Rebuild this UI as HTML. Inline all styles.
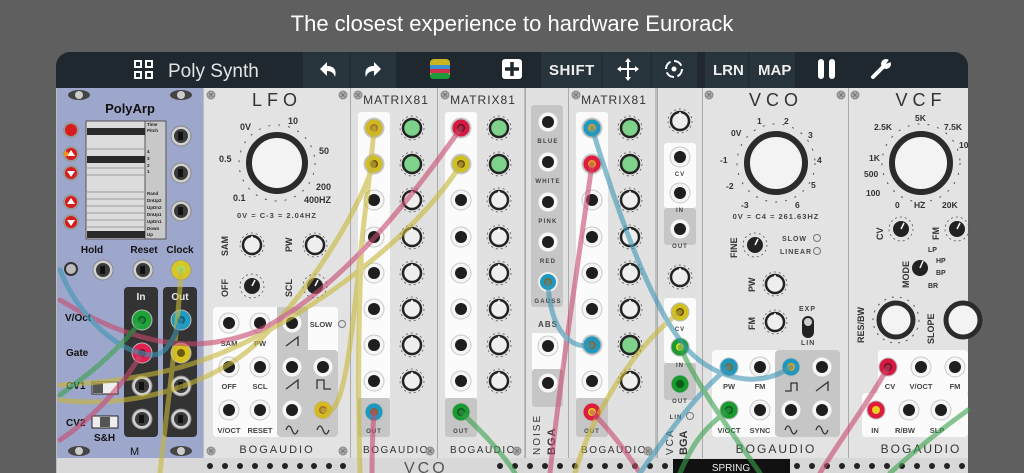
<!DOCTYPE html>
<html><head><meta charset="utf-8"><style>
html,body{margin:0;padding:0;background:#5f5f5f;width:1024px;height:473px;overflow:hidden}
svg{display:block}
text{font-family:"Liberation Sans",sans-serif}
</style></head><body>
<svg width="1024" height="473" viewBox="0 0 1024 473" xmlns="http://www.w3.org/2000/svg">
<defs>
 <g id="jk"><circle r="10" fill="#f6f6f6" stroke="#c8c8c8"/><circle r="6" fill="#1e1e1e"/></g>
 <g id="mj"><circle r="10" fill="#cfcfcf" stroke="#888"/><circle r="7" fill="#3a3a3a"/><rect x="-3" y="-4" width="5" height="8" fill="#111"/></g>
 <g id="kn"><circle r="12" fill="none" stroke="#555" stroke-width="0.8" stroke-dasharray="2 3"/><circle r="9" fill="#eee" stroke="#222" stroke-width="2.5"/><line x1="0" y1="-9" x2="0" y2="-5" stroke="#fff" stroke-width="1.5"/></g>
 <g id="gk"><circle r="12" fill="none" stroke="#555" stroke-width="0.8" stroke-dasharray="2 3"/><circle r="9" fill="#7fd28c" stroke="#222" stroke-width="2.5"/></g>
 <g id="dk"><circle r="12" fill="none" stroke="#555" stroke-width="0.8" stroke-dasharray="2 3"/><circle r="8" fill="#222"/><line x1="0" y1="0" x2="3" y2="-6" stroke="#fff" stroke-width="1.5"/></g>
 <g id="sc"><circle r="4" fill="#aaa" stroke="#888"/><path d="M-2 -2L2 2M2 -2L-2 2" stroke="#777"/></g>
</defs>
<text x="512" y="31" font-size="22" fill="#fff" text-anchor="middle">The closest experience to hardware Eurorack</text>
<path d="M56 66a14 14 0 0 1 14-14h884a14 14 0 0 1 14 14V473H56Z" fill="#1e282e"/>
<rect x="303" y="52" width="93" height="36" fill="#28343b"/>
<line x1="350" y1="52" x2="350" y2="88" stroke="#1e282e"/>
<rect x="541" y="52" width="156" height="36" fill="#28343b"/>
<line x1="602" y1="52" x2="602" y2="88" stroke="#1e282e"/><line x1="651" y1="52" x2="651" y2="88" stroke="#1e282e"/>
<rect x="705" y="52" width="90" height="36" fill="#28343b"/>
<line x1="749" y1="52" x2="749" y2="88" stroke="#1e282e"/>
<g fill="#fff"><rect x="134" y="60" width="8" height="8"/><rect x="145" y="60" width="8" height="8"/><rect x="134" y="71" width="8" height="8"/><rect x="145" y="71" width="8" height="8"/></g>
<g fill="#1e282e"><rect x="136" y="62" width="4" height="4"/><rect x="147" y="62" width="4" height="4"/><rect x="136" y="73" width="4" height="4"/><rect x="147" y="73" width="4" height="4"/></g>
<text x="168" y="77" font-size="19" fill="#e4e4e4">Poly Synth</text>
<path d="M320 69l7-7v4c7 0 10 4 8 11c-1-4-4-6-8-6v5z" fill="#fff"/>
<path d="M381 69l-7-7v4c-7 0-10 4-8 11c1-4 4-6 8-6v5z" fill="#fff"/>
<rect x="430" y="59" width="20" height="20" rx="4" fill="#c9b321"/><rect x="430" y="65" width="20" height="4" fill="#3a8fd0"/><rect x="430" y="69" width="20" height="4" fill="#d03050"/><rect x="430" y="73" width="20" height="6" rx="3" fill="#1f9a3a"/>
<rect x="502" y="59" width="20" height="20" rx="3" fill="#fff"/><path d="M512 62v14M505 69h14" stroke="#1e282e" stroke-width="3.5"/>
<text x="549" y="75" font-size="15" font-weight="bold" fill="#eee" font-family="Liberation Mono" letter-spacing="0.5">SHIFT</text>
<path d="M628 60v19M618 69h20" stroke="#fff" stroke-width="2"/><path d="M628 58l-3 4h6zM628 81l-3-4h6zM617 69l4-3v6zM639 69l-4-3v6z" fill="#fff"/>
<circle cx="674" cy="69" r="8" fill="none" stroke="#fff" stroke-width="2" stroke-dasharray="9 3.5"/><circle cx="674" cy="69" r="2.5" fill="#fff"/>
<text x="713" y="75" font-size="15" font-weight="bold" fill="#eee" font-family="Liberation Mono">LRN</text>
<text x="758" y="75" font-size="15" font-weight="bold" fill="#eee" font-family="Liberation Mono">MAP</text>
<rect x="818" y="59" width="6" height="20" rx="3" fill="#fff"/><rect x="829" y="59" width="6" height="20" rx="3" fill="#fff"/>
<path d="M873 77l10-10" stroke="#fff" stroke-width="4" stroke-linecap="round"/><circle cx="886" cy="64" r="5" fill="#fff"/><path d="M886 64l4-6 3 3z" fill="#1e282e"/>

<rect x="56" y="88" width="912" height="385" fill="#bdbdbd"/>
<rect x="57" y="88" width="146" height="370" fill="#9da6cb"/>
<text x="130" y="113" font-size="13" font-weight="bold" text-anchor="middle" fill="#111">PolyArp</text>
<rect x="86" y="121" width="80" height="118" fill="#dcdcdc" stroke="#555"/>
<rect x="145" y="121" width="21" height="118" fill="#c8c8c8" stroke="#555"/>
<g fill="#2a2a2a"><rect x="87" y="128" width="58" height="7"/><rect x="87" y="156" width="58" height="7"/><rect x="87" y="231" width="58" height="7"/></g>
<g stroke="#888" stroke-width="0.8"><path d="M87 149h58M87 168h58M87 175h58M87 192h58M87 199h58M87 206h58M87 213h58M87 220h58M87 227h58"/></g>
<g font-size="4.5" font-weight="bold" fill="#222"><text x="147" y="126">Time</text><text x="147" y="132">Pitch</text><text x="147" y="153">4</text><text x="147" y="160">3</text><text x="147" y="167">2</text><text x="147" y="173">1</text><text x="147" y="195">Rand</text><text x="147" y="202">DnUp2</text><text x="147" y="209">UpDn2</text><text x="147" y="216">DnUp1</text><text x="147" y="223">UpDn1</text><text x="147" y="230">Down</text><text x="147" y="236">Up</text></g>
<g fill="#d61c1c" stroke="#999" stroke-width="2"><circle cx="71" cy="130" r="7"/><circle cx="71" cy="154" r="7"/><circle cx="71" cy="173" r="7"/><circle cx="71" cy="202" r="7"/><circle cx="71" cy="222" r="7"/></g>
<g fill="#fff"><path d="M71 150l4 6h-8zM71 177l4-6h-8zM71 198l4 6h-8zM71 226l4-6h-8z"/></g>
<circle cx="66" cy="154" r="2.5" fill="#f39020"/>
<use href="#mj" x="181" y="136"/><use href="#mj" x="181" y="173"/><use href="#mj" x="181" y="211"/>
<g font-size="10" font-weight="bold" fill="#111" text-anchor="middle"><text x="92" y="253">Hold</text><text x="144" y="253">Reset</text><text x="180" y="253">Clock</text></g>
<circle cx="71" cy="269" r="6" fill="#bbb" stroke="#333" stroke-width="2"/>
<use href="#mj" x="103" y="270"/><use href="#mj" x="143" y="270"/>
<circle cx="181" cy="270" r="10" fill="#d6c824" stroke="#999"/><circle cx="181" cy="270" r="4" fill="#9ee07a"/>
<rect x="124" y="287" width="34" height="150" rx="4" fill="#333"/><rect x="163" y="287" width="34" height="150" rx="4" fill="#333"/>
<text x="141" y="300" font-size="10" font-weight="bold" fill="#eee" text-anchor="middle">In</text><text x="180" y="300" font-size="10" font-weight="bold" fill="#eee" text-anchor="middle">Out</text>
<circle cx="142" cy="320" r="10" fill="#1da33a" stroke="#bbb"/><circle cx="142" cy="320" r="4" fill="#0a5a1c"/>
<circle cx="142" cy="353" r="10" fill="#e0204f" stroke="#bbb"/><circle cx="142" cy="353" r="4" fill="#7a1020"/>
<use href="#mj" x="142" y="386"/><use href="#mj" x="142" y="419"/>
<circle cx="181" cy="320" r="10" fill="#1f9ac0" stroke="#bbb"/><circle cx="181" cy="320" r="4" fill="#0b5a72"/>
<circle cx="181" cy="353" r="10" fill="#d8c420" stroke="#bbb"/><circle cx="181" cy="353" r="4" fill="#6a5a10"/>
<use href="#mj" x="181" y="386"/><use href="#mj" x="181" y="419"/>
<g font-size="10" font-weight="bold" fill="#111"><text x="65" y="321">V/Oct</text><text x="66" y="356">Gate</text><text x="66" y="389">CV1</text><text x="66" y="426">CV2</text><text x="94" y="441">S&amp;H</text></g>
<rect x="92" y="382" width="26" height="12" fill="#eee" stroke="#222"/><rect x="93" y="383" width="10" height="10" fill="#555"/>
<rect x="92" y="416" width="26" height="12" fill="#eee" stroke="#222"/><rect x="100" y="417" width="10" height="10" fill="#555"/>
<text x="130" y="455" font-size="11" fill="#111">M</text>
<g fill="#444"><ellipse cx="79" cy="95" rx="11" ry="5"/><ellipse cx="181" cy="95" rx="11" ry="5"/><ellipse cx="79" cy="451" rx="11" ry="5"/><ellipse cx="181" cy="451" rx="11" ry="5"/></g>
<g fill="#ccc"><circle cx="79" cy="95" r="4"/><circle cx="181" cy="95" r="4"/><circle cx="79" cy="451" r="4"/><circle cx="181" cy="451" r="4"/></g>

<rect x="204" y="88" width="146" height="370" fill="#e3e3e3"/>
<text x="277" y="106" font-size="18" text-anchor="middle" fill="#333" letter-spacing="5">LFO</text>
<circle cx="277" cy="163" r="28" fill="#f3f3f3" stroke="#2b2b2b" stroke-width="6"/>
<circle cx="277" cy="163" r="38" fill="none" stroke="#555" stroke-width="1" stroke-dasharray="2 8"/>
<g font-size="9" font-weight="bold" fill="#333"><text x="240" y="130">0V</text><text x="288" y="124">10</text><text x="319" y="154">50</text><text x="219" y="162">0.5</text><text x="316" y="190">200</text><text x="233" y="201">0.1</text><text x="304" y="203">400HZ</text></g>
<text x="277" y="218" font-size="7.5" font-weight="bold" fill="#444" text-anchor="middle" letter-spacing="1">0V = C-3 = 2.04HZ</text>
<use href="#kn" x="252" y="245"/><use href="#kn" x="315" y="245"/><use href="#dk" x="252" y="286"/><use href="#dk" x="315" y="286"/>
<g font-size="9" font-weight="bold" fill="#333"><text transform="translate(228,256) rotate(-90)">SAM</text><text transform="translate(292,252) rotate(-90)">PW</text><text transform="translate(228,297) rotate(-90)">OFF</text><text transform="translate(292,297) rotate(-90)">SCL</text></g>
<rect x="213" y="307" width="125" height="130" rx="4" fill="#fbfbfb"/>
<rect x="277" y="307" width="31" height="45" fill="#c8c8c8"/><rect x="277" y="350" width="61" height="87" rx="4" fill="#c8c8c8"/>
<use href="#jk" x="229" y="323"/><use href="#jk" x="260" y="323"/><use href="#jk" x="292" y="323"/>
<use href="#jk" x="229" y="367"/><use href="#jk" x="260" y="367"/><use href="#jk" x="292" y="367"/><use href="#jk" x="323" y="367"/>
<use href="#jk" x="229" y="410"/><use href="#jk" x="260" y="410"/><use href="#jk" x="292" y="410"/>
<circle cx="323" cy="410" r="9" fill="#d6b820" stroke="#bbb"/><circle cx="323" cy="410" r="4" fill="#a0702a"/>
<g font-size="7.5" font-weight="bold" fill="#444" text-anchor="middle"><text x="229" y="346">SAM</text><text x="260" y="346">PW</text><text x="229" y="389">OFF</text><text x="260" y="389">SCL</text><text x="229" y="433">V/OCT</text><text x="260" y="433">RESET</text><text x="321" y="327">SLOW</text></g>
<circle cx="342" cy="324" r="3.5" fill="none" stroke="#777"/>
<path d="M286 346l12-9v9M286 389l12-9v9M317 389v-9h7v9h7M286 430q3-8 6 0t6 0M317 430q3-8 6 0t6 0" stroke="#333" fill="none" stroke-width="1.3"/>
<text x="277" y="453" font-size="11" fill="#333" text-anchor="middle" letter-spacing="2">BOGAUDIO</text>
<use href="#sc" x="211" y="95"/><use href="#sc" x="343" y="95"/><use href="#sc" x="211" y="451"/><use href="#sc" x="343" y="451"/>

<g id="mx">
<rect x="351" y="88" width="86" height="370" fill="#e1e1e1"/>
<line x1="350.5" y1="88" x2="350.5" y2="458" stroke="#aaa"/>
<text x="396" y="104" font-size="12" fill="#333" text-anchor="middle" letter-spacing="1">MATRIX81</text>
<rect x="358" y="112" width="32" height="287" rx="3" fill="#fbfbfb"/><rect x="358" y="398" width="32" height="39" rx="3" fill="#c6c6c6"/>
<use href="#jk" x="374" y="164"/><use href="#jk" x="374" y="200"/><use href="#jk" x="374" y="237"/><use href="#jk" x="374" y="273"/><use href="#jk" x="374" y="309"/><use href="#jk" x="374" y="345"/><use href="#jk" x="374" y="381"/><use href="#jk" x="374" y="128"/>
<use href="#kn" x="412" y="200"/><use href="#kn" x="412" y="237"/><use href="#kn" x="412" y="273"/><use href="#kn" x="412" y="309"/><use href="#kn" x="412" y="345"/><use href="#kn" x="412" y="381"/>
<text x="374" y="433" font-size="6" font-weight="bold" fill="#444" text-anchor="middle" letter-spacing="1">OUT</text>
<text x="396" y="453" font-size="10" fill="#333" text-anchor="middle" letter-spacing="1.5">BOGAUDIO</text>
<use href="#sc" x="358" y="95"/><use href="#sc" x="430" y="451"/>
</g>
<use href="#mx" x="87" y="0"/><use href="#mx" x="218" y="0"/>
<use href="#gk" x="412" y="128"/><use href="#gk" x="412" y="164"/><use href="#gk" x="499" y="128"/><use href="#gk" x="499" y="164"/>
<use href="#gk" x="630" y="128"/><use href="#gk" x="630" y="164"/><use href="#gk" x="630" y="345"/>
<g stroke="#bbb">
<circle cx="374" cy="128" r="9" fill="#d0b820"/><circle cx="374" cy="164" r="9" fill="#d0c020"/><circle cx="374" cy="412" r="9" fill="#1f98c0"/>
<circle cx="461" cy="128" r="9" fill="#d41a40"/><circle cx="461" cy="164" r="9" fill="#d0c020"/><circle cx="461" cy="412" r="9" fill="#1a9a30"/>
<circle cx="592" cy="128" r="9" fill="#1f98c0"/><circle cx="592" cy="164" r="9" fill="#e01c3c"/><circle cx="592" cy="345" r="9" fill="#1f98c0"/><circle cx="592" cy="412" r="9" fill="#e01c3c"/>
</g>
<g fill="#6a4a10"><circle cx="374" cy="128" r="4" fill="#a0702a"/><circle cx="374" cy="164" r="4"/><circle cx="374" cy="412" r="4" fill="#7a6a3a"/><circle cx="461" cy="128" r="4" fill="#701020"/><circle cx="461" cy="164" r="4"/><circle cx="461" cy="412" r="4" fill="#0a5a1a"/><circle cx="592" cy="128" r="4" fill="#e0a020"/><circle cx="592" cy="164" r="4" fill="#e0a020"/><circle cx="592" cy="345" r="4" fill="#7a6a3a"/><circle cx="592" cy="412" r="4" fill="#e8d020"/></g>

<rect x="526" y="88" width="42" height="370" fill="#e1e1e1"/>
<line x1="525.5" y1="88" x2="525.5" y2="458" stroke="#aaa"/><line x1="568.5" y1="88" x2="568.5" y2="458" stroke="#aaa"/>
<rect x="531" y="105" width="32" height="202" rx="3" fill="#c6c6c6"/>
<use href="#jk" x="548" y="122"/><use href="#jk" x="548" y="162"/><use href="#jk" x="548" y="202"/><use href="#jk" x="548" y="242"/>
<circle cx="548" cy="282" r="9" fill="#1f98c0" stroke="#eee" stroke-width="2"/><circle cx="548" cy="282" r="4" fill="#7a6a3a"/>
<g font-size="6" font-weight="bold" fill="#444" text-anchor="middle" letter-spacing="1.2"><text x="548" y="143">BLUE</text><text x="548" y="183">WHITE</text><text x="548" y="223">PINK</text><text x="548" y="263">RED</text><text x="548" y="303">GAUSS</text><text x="548" y="368">IN</text><text x="548" y="403">OUT</text></g>
<text x="548" y="327" font-size="8" font-weight="bold" fill="#444" text-anchor="middle" letter-spacing="1">ABS</text>
<rect x="532" y="333" width="31" height="42" fill="#fbfbfb"/><rect x="532" y="369" width="31" height="38" rx="3" fill="#c6c6c6"/>
<use href="#jk" x="548" y="346"/><use href="#jk" x="548" y="383"/>
<text transform="translate(540,455) rotate(-90)" font-size="10" fill="#333" letter-spacing="2">NOISE</text>
<text transform="translate(555,455) rotate(-90)" font-size="11" font-weight="bold" fill="#333" letter-spacing="1">BGA</text>

<rect x="658" y="88" width="44" height="370" fill="#e1e1e1"/>
<line x1="657.5" y1="88" x2="657.5" y2="458" stroke="#aaa"/>
<use href="#kn" x="680" y="121"/><use href="#kn" x="680" y="277"/>
<rect x="664" y="143" width="32" height="65" rx="3" fill="#fbfbfb"/><rect x="664" y="208" width="32" height="37" rx="3" fill="#c6c6c6"/>
<use href="#jk" x="680" y="157"/><use href="#jk" x="680" y="193"/><use href="#jk" x="680" y="229"/>
<rect x="664" y="298" width="32" height="65" rx="3" fill="#fbfbfb"/><rect x="664" y="363" width="32" height="37" rx="3" fill="#c6c6c6"/>
<circle cx="680" cy="312" r="9" fill="#d0c020" stroke="#bbb"/><circle cx="680" cy="312" r="4" fill="#6a4a10"/>
<circle cx="680" cy="347" r="9" fill="#1a9a30" stroke="#bbb"/><circle cx="680" cy="347" r="4" fill="#e8e020"/>
<circle cx="680" cy="384" r="9" fill="#1a9a30" stroke="#bbb"/><circle cx="680" cy="384" r="4" fill="#0a5a1a"/>
<g font-size="6" font-weight="bold" fill="#444" text-anchor="middle" letter-spacing="1"><text x="680" y="176">CV</text><text x="680" y="212">IN</text><text x="680" y="248">OUT</text><text x="680" y="331">CV</text><text x="680" y="367">IN</text><text x="680" y="403">OUT</text><text x="676" y="419">LIN</text></g>
<circle cx="690" cy="416" r="3.5" fill="none" stroke="#777"/>
<text transform="translate(673,455) rotate(-90)" font-size="10" fill="#333" letter-spacing="2">VCA</text>
<text transform="translate(687,455) rotate(-90)" font-size="11" font-weight="bold" fill="#333">BGA</text>

<rect x="703" y="88" width="145" height="370" fill="#e3e3e3"/>
<line x1="702.5" y1="88" x2="702.5" y2="458" stroke="#aaa"/>
<text x="776" y="106" font-size="18" text-anchor="middle" fill="#333" letter-spacing="5">VCO</text>
<circle cx="776" cy="163" r="29" fill="#f3f3f3" stroke="#2b2b2b" stroke-width="6"/>
<circle cx="776" cy="163" r="39" fill="none" stroke="#555" stroke-dasharray="2 8"/>
<g font-size="8.5" font-weight="bold" fill="#333"><text x="731" y="136">0V</text><text x="757" y="124">1</text><text x="784" y="124">2</text><text x="808" y="138">3</text><text x="817" y="163">4</text><text x="720" y="163">-1</text><text x="726" y="189">-2</text><text x="811" y="188">5</text><text x="741" y="208">-3</text><text x="795" y="208">6</text></g>
<text x="776" y="219" font-size="7.5" font-weight="bold" fill="#444" text-anchor="middle" letter-spacing="1">0V = C4 = 261.63HZ</text>
<use href="#dk" x="755" y="245"/><use href="#kn" x="775" y="284"/><use href="#kn" x="775" y="322"/>
<g font-size="9" font-weight="bold" fill="#333"><text transform="translate(737,258) rotate(-90)">FINE</text><text transform="translate(755,292) rotate(-90)">PW</text><text transform="translate(755,330) rotate(-90)">FM</text></g>
<g font-size="7" font-weight="bold" fill="#444" letter-spacing="1"><text x="782" y="241">SLOW</text><text x="780" y="254">LINEAR</text><text x="799" y="311">EXP</text><text x="801" y="345">LIN</text></g>
<circle cx="817" cy="238" r="3.5" fill="none" stroke="#777"/><circle cx="817" cy="251" r="3.5" fill="none" stroke="#777"/>
<rect x="802" y="316" width="12" height="22" rx="6" fill="#222"/><circle cx="808" cy="322" r="4" fill="#ccc"/>
<rect x="712" y="350" width="128" height="87" rx="4" fill="#fbfbfb"/><rect x="775" y="350" width="65" height="87" rx="4" fill="#c6c6c6"/>
<use href="#jk" x="760" y="367"/><use href="#jk" x="822" y="367"/><use href="#jk" x="760" y="410"/><use href="#jk" x="791" y="410"/><use href="#jk" x="822" y="410"/>
<circle cx="729" cy="367" r="9" fill="#1f98c0" stroke="#bbb"/><circle cx="729" cy="367" r="4" fill="#7a6a3a"/>
<circle cx="791" cy="367" r="9" fill="#1f98c0" stroke="#bbb"/><circle cx="791" cy="367" r="4" fill="#e0a020"/>
<circle cx="729" cy="410" r="9" fill="#1a9a30" stroke="#bbb"/><circle cx="729" cy="410" r="4" fill="#0a5a1a"/>
<g font-size="7.5" font-weight="bold" fill="#444" text-anchor="middle"><text x="729" y="389">PW</text><text x="760" y="389">FM</text><text x="729" y="433">V/OCT</text><text x="760" y="433">SYNC</text></g>
<path d="M785 391h6v-8h6v8M816 391l12-9v9M785 430q3-8 6 0t6 0M816 430q3-8 6 0t6 0" stroke="#333" fill="none" stroke-width="1.3"/>
<text x="776" y="453" font-size="12" fill="#333" text-anchor="middle" letter-spacing="2">BOGAUDIO</text>
<use href="#sc" x="709" y="95"/><use href="#sc" x="841" y="95"/>

<rect x="849" y="88" width="119" height="370" fill="#e3e3e3"/>
<line x1="848.5" y1="88" x2="848.5" y2="458" stroke="#aaa"/>
<text x="921" y="106" font-size="18" text-anchor="middle" fill="#333" letter-spacing="5">VCF</text>
<circle cx="921" cy="163" r="29" fill="#f3f3f3" stroke="#2b2b2b" stroke-width="6"/>
<circle cx="921" cy="163" r="39" fill="none" stroke="#555" stroke-dasharray="2 8"/>
<g font-size="8.5" font-weight="bold" fill="#333"><text x="874" y="130">2.5K</text><text x="915" y="121">5K</text><text x="944" y="130">7.5K</text><text x="959" y="148">10</text><text x="869" y="161">1K</text><text x="864" y="177">500</text><text x="866" y="196">100</text><text x="895" y="208">0</text><text x="914" y="208">HZ</text><text x="942" y="208">20K</text></g>
<use href="#dk" x="901" y="229"/><use href="#dk" x="957" y="229"/>
<circle cx="920" cy="268" r="8" fill="#222"/><line x1="920" y1="268" x2="923" y2="261" stroke="#fff" stroke-width="1.5"/>
<g font-size="9" font-weight="bold" fill="#333"><text transform="translate(883,240) rotate(-90)">CV</text><text transform="translate(939,240) rotate(-90)">FM</text><text transform="translate(909,288) rotate(-90)">MODE</text><text transform="translate(864,343) rotate(-90)">RES/BW</text><text transform="translate(934,344) rotate(-90)">SLOPE</text></g>
<g font-size="7" font-weight="bold" fill="#333"><text x="928" y="252">LP</text><text x="936" y="263">HP</text><text x="936" y="275">BP</text><text x="928" y="288">BR</text></g>
<circle cx="896" cy="320" r="17" fill="#f3f3f3" stroke="#2b2b2b" stroke-width="5"/><circle cx="896" cy="320" r="23" fill="none" stroke="#555" stroke-dasharray="2 6"/>
<circle cx="963" cy="320" r="17" fill="#f3f3f3" stroke="#2b2b2b" stroke-width="5"/>
<rect x="878" y="350" width="90" height="45" rx="4" fill="#fbfbfb"/><rect x="862" y="393" width="106" height="44" rx="4" fill="#fbfbfb"/>
<use href="#jk" x="921" y="367"/><use href="#jk" x="955" y="367"/><use href="#jk" x="909" y="410"/><use href="#jk" x="941" y="410"/>
<circle cx="888" cy="367" r="9" fill="#d41a40" stroke="#bbb"/><circle cx="888" cy="367" r="4" fill="#701020"/>
<circle cx="876" cy="410" r="9" fill="#e01c3c" stroke="#bbb"/><circle cx="876" cy="410" r="4" fill="#e8d020"/>
<g font-size="7.5" font-weight="bold" fill="#444" text-anchor="middle"><text x="890" y="389">CV</text><text x="921" y="389">V/OCT</text><text x="955" y="389">FM</text><text x="875" y="433">IN</text><text x="905" y="433">R/BW</text><text x="937" y="433">SLP</text></g>
<text x="921" y="453" font-size="12" fill="#333" text-anchor="middle" letter-spacing="2">BOGAUDIO</text>
<use href="#sc" x="855" y="95"/>

<rect x="57" y="458" width="911" height="15" fill="#d8d8d8"/>
<g fill="#222">
<circle cx="210" cy="466" r="3"/><circle cx="225" cy="466" r="3"/><circle cx="240" cy="466" r="3"/><circle cx="255" cy="466" r="3"/><circle cx="270" cy="466" r="3"/><circle cx="285" cy="466" r="3"/><circle cx="300" cy="466" r="3"/><circle cx="314" cy="466" r="3"/><circle cx="329" cy="466" r="3"/><circle cx="343" cy="466" r="3"/>
<circle cx="500" cy="466" r="3"/><circle cx="515" cy="466" r="3"/><circle cx="530" cy="466" r="3"/><circle cx="545" cy="466" r="3"/><circle cx="560" cy="466" r="3"/><circle cx="575" cy="466" r="3"/><circle cx="590" cy="466" r="3"/><circle cx="605" cy="466" r="3"/><circle cx="620" cy="466" r="3"/><circle cx="635" cy="466" r="3"/><circle cx="650" cy="466" r="3"/><circle cx="665" cy="466" r="3"/>
<circle cx="797" cy="466" r="3"/><circle cx="812" cy="466" r="3"/><circle cx="827" cy="466" r="3"/><circle cx="842" cy="466" r="3"/><circle cx="857" cy="466" r="3"/><circle cx="872" cy="466" r="3"/><circle cx="887" cy="466" r="3"/><circle cx="902" cy="466" r="3"/><circle cx="917" cy="466" r="3"/><circle cx="932" cy="466" r="3"/><circle cx="947" cy="466" r="3"/><circle cx="962" cy="466" r="3"/>
</g>
<rect x="673" y="459" width="117" height="14" fill="#111"/>
<text x="731" y="471" font-size="10" fill="#eee" text-anchor="middle">SPRING</text>
<text x="404" y="473" font-size="16" fill="#555" letter-spacing="3">VCO</text>

<g fill="none" stroke-width="5" stroke-linecap="round" opacity="0.6">
<path d="M374 128C370 180 366 200 362 240 358 320 358 400 360 473" stroke="#c8b83a"/>
<path d="M374 164C350 230 300 300 260 340 220 380 140 410 60 400" stroke="#c8b83a"/>
<path d="M461 164C420 230 330 300 250 340 200 365 150 380 60 385" stroke="#c8b83a"/>
<path d="M181 270C178 330 168 400 160 473" stroke="#c8b83a"/>
<path d="M323 410C345 425 352 330 362 240" stroke="#c8b83a"/>
<path d="M680 312C630 350 590 420 575 473" stroke="#c8b83a"/>
<path d="M461 128C410 200 340 290 260 330 210 350 150 355 60 300" stroke="#c84a6e"/>
<path d="M142 353C120 390 90 420 60 440" stroke="#c84a6e"/>
<path d="M592 164C580 250 560 380 550 473" stroke="#c84a6e"/>
<path d="M592 412C610 430 625 450 640 473" stroke="#c84a6e"/>
<path d="M888 367C870 400 840 440 820 473" stroke="#c84a6e"/>
<path d="M374 412C372 440 372 460 372 473" stroke="#c84a6e"/>
<path d="M592 128C620 220 650 300 680 340 700 370 750 395 791 367" stroke="#3f96b4"/>
<path d="M548 282C550 330 570 350 592 345" stroke="#3f96b4"/>
<path d="M729 367C700 390 670 430 640 473" stroke="#3f96b4"/>
<path d="M181 320C170 350 160 360 142 353 120 350 80 320 60 270" stroke="#3f96b4"/>
<path d="M142 320C110 360 80 380 60 395" stroke="#3aa24e"/>
<path d="M680 347C700 390 730 430 760 473" stroke="#3aa24e"/>
<path d="M729 410C700 430 690 450 680 473" stroke="#3aa24e"/>
<path d="M461 412C480 430 500 450 515 473" stroke="#3aa24e"/>
<path d="M968 410C940 430 910 455 890 473" stroke="#3aa24e"/>
</g>
</svg>
</body></html>
